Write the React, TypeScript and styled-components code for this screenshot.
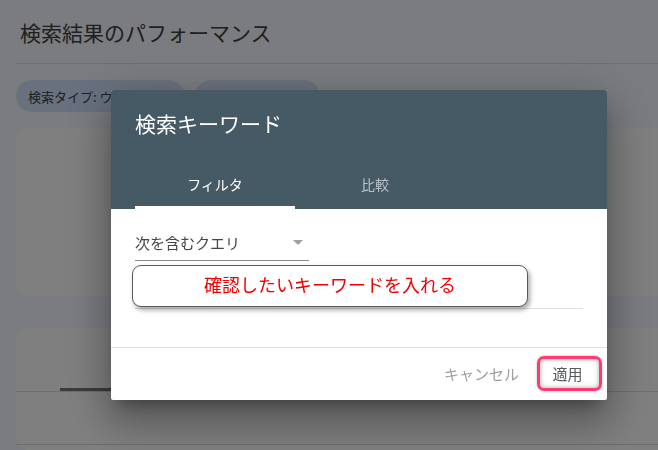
import React from "react";
import styled, { createGlobalStyle } from "styled-components";

const GlobalStyle = createGlobalStyle`
  html, body {
    margin: 0;
    padding: 0;
    width: 658px;
    height: 450px;
    overflow: hidden;
    background: #f6f8fe;
  }
  body {
    font-family: "Noto Sans CJK JP", "Noto Sans", sans-serif;
  }
  * { box-sizing: border-box; }
`;

const Page = styled.div`
  width: 658px;
  height: 450px;
  overflow: hidden;
  display: flex;
  flex-direction: column;
`;

const Header = styled.header`
  margin-left: 16px;
  height: 64px;
  padding-left: 4px;
  border-bottom: 1px solid #dadce0;
  display: flex;
  align-items: center;
  font-size: 21px;
  color: #3c4043;
`;

const ChipRow = styled.div`
  margin-top: 16px;
  height: 32px;
  padding-left: 16px;
  display: flex;
  align-items: center;
  gap: 10px;
`;

const Chip = styled.div<{ $w: number }>`
  width: ${(p) => p.$w}px;
  height: 32px;
  border-radius: 16px;
  background: #d3e3fd;
  color: #3c4043;
  font-size: 13px;
  display: flex;
  align-items: center;
  padding: 0 12px;
  white-space: nowrap;
  overflow: hidden;
`;

const AddLink = styled.div`
  margin-left: 16px;
  font-size: 13px;
  color: #3c4043;
  font-weight: 500;
`;

const Card = styled.section<{ $top: number; $h?: number }>`
  margin: ${(p) => p.$top}px -16px 0 16px;
  ${(p) => (p.$h ? `height: ${p.$h}px;` : "flex: 1;")}
  border-radius: 14px;
  background: #ffffff;
  display: flex;
  flex-direction: column;
`;

const CardTabs = styled.div`
  height: 64px;
  border-bottom: 1px solid #dcdcdc;
  display: flex;
  padding-left: 44px;
`;

const CardTab = styled.div`
  width: 160px;
  border-bottom: 3px solid #787878;
`;

const CardRow = styled.div`
  height: 53px;
  border-bottom: 1px solid #dcdcdc;
`;

const Overlay = styled.div`
  position: fixed;
  inset: 0;
  background: rgba(0, 0, 0, 0.5);
  padding: 90px 0 0 111px;
`;

const Dialog = styled.div`
  width: 496px;
  height: 310px;
  background: #ffffff;
  border-radius: 2px;
  overflow: hidden;
  display: flex;
  flex-direction: column;
  box-shadow: 0 11px 15px -7px rgba(0, 0, 0, 0.3),
    0 24px 38px 3px rgba(0, 0, 0, 0.2), 0 9px 46px 8px rgba(0, 0, 0, 0.16);
`;

const DialogHeader = styled.div`
  background: #455a64;
  padding: 19px 24px 0;
`;

const DialogTitle = styled.h2`
  margin: 0 0 24px;
  font-size: 21px;
  line-height: 28px;
  font-weight: 400;
  color: #ffffff;
`;

const Tabs = styled.div`
  display: flex;
  height: 48px;
`;

const Tab = styled.div<{ $active?: boolean }>`
  width: 160px;
  display: flex;
  align-items: center;
  justify-content: center;
  font-size: 14px;
  color: ${(p) => (p.$active ? "#ffffff" : "#b9c4ca")};
  border-bottom: 3px solid ${(p) => (p.$active ? "#ffffff" : "transparent")};
`;

const DialogBody = styled.div`
  position: relative;
  padding: 16px 24px 38px;
`;

const Select = styled.div`
  width: 174px;
  height: 36px;
  border-bottom: 1px solid #8a8a8a;
  display: flex;
  align-items: center;
  justify-content: space-between;
  padding-right: 6px;
  font-size: 15px;
  color: #444444;
`;

const Caret = styled.span`
  width: 0;
  height: 0;
  border-left: 5.5px solid transparent;
  border-right: 5.5px solid transparent;
  border-top: 5px solid #a0a0a0;
`;

const InputField = styled.div`
  height: 48px;
  border-bottom: 1px solid #e0e0e0;
`;

const Annotation = styled.div`
  position: absolute;
  left: 21px;
  top: 56px;
  width: 396px;
  height: 42px;
  border: 1px solid #5a5a5a;
  border-radius: 9px;
  background: #ffffff;
  box-shadow: 2px 3px 5px rgba(0, 0, 0, 0.35);
  display: flex;
  align-items: center;
  justify-content: center;
  padding-bottom: 4px;
  color: #f00000;
  font-size: 18px;
`;

const Footer = styled.div`
  height: 53px;
  border-top: 1px solid #e0e0e0;
  display: flex;
  align-items: center;
  justify-content: flex-end;
  gap: 10px;
  padding: 0 5px 2px 0;
`;

const TextButton = styled.button<{ $color: string }>`
  background: none;
  border: none;
  font-family: inherit;
  font-size: 15px;
  color: ${(p) => p.$color};
  padding: 0 8px;
  height: 36px;
`;

const Highlight = styled.div`
  width: 65px;
  height: 35px;
  border: 3px solid #ff3a70;
  border-radius: 7px;
  box-shadow: inset 0 0 5px rgba(0, 0, 0, 0.35), 0 0 3px rgba(0, 0, 0, 0.25);
  display: flex;
  align-items: center;
  justify-content: center;
  padding-right: 4px;
`;

export default function App() {
  return (
    <>
      <GlobalStyle />
      <Page>
        <Header>検索結果のパフォーマンス</Header>
        <ChipRow>
          <Chip $w={169}>検索タイプ: ウェブ</Chip>
          <Chip $w={125}>日付: 過去 3 か月</Chip>
          <AddLink>＋ 新規</AddLink>
        </ChipRow>
        <Card $top={16} $h={168} />
        <Card $top={32}>
          <CardTabs>
            <CardTab />
          </CardTabs>
          <CardRow />
        </Card>
      </Page>
      <Overlay>
        <Dialog>
          <DialogHeader>
            <DialogTitle>検索キーワード</DialogTitle>
            <Tabs>
              <Tab $active>フィルタ</Tab>
              <Tab>比較</Tab>
            </Tabs>
          </DialogHeader>
          <DialogBody>
            <Select>
              <span>次を含むクエリ</span>
              <Caret />
            </Select>
            <InputField />
            <Annotation>確認したいキーワードを入れる</Annotation>
          </DialogBody>
          <Footer>
            <TextButton $color="#9e9e9e">キャンセル</TextButton>
            <Highlight>
              <TextButton $color="#555a5e">適用</TextButton>
            </Highlight>
          </Footer>
        </Dialog>
      </Overlay>
    </>
  );
}
